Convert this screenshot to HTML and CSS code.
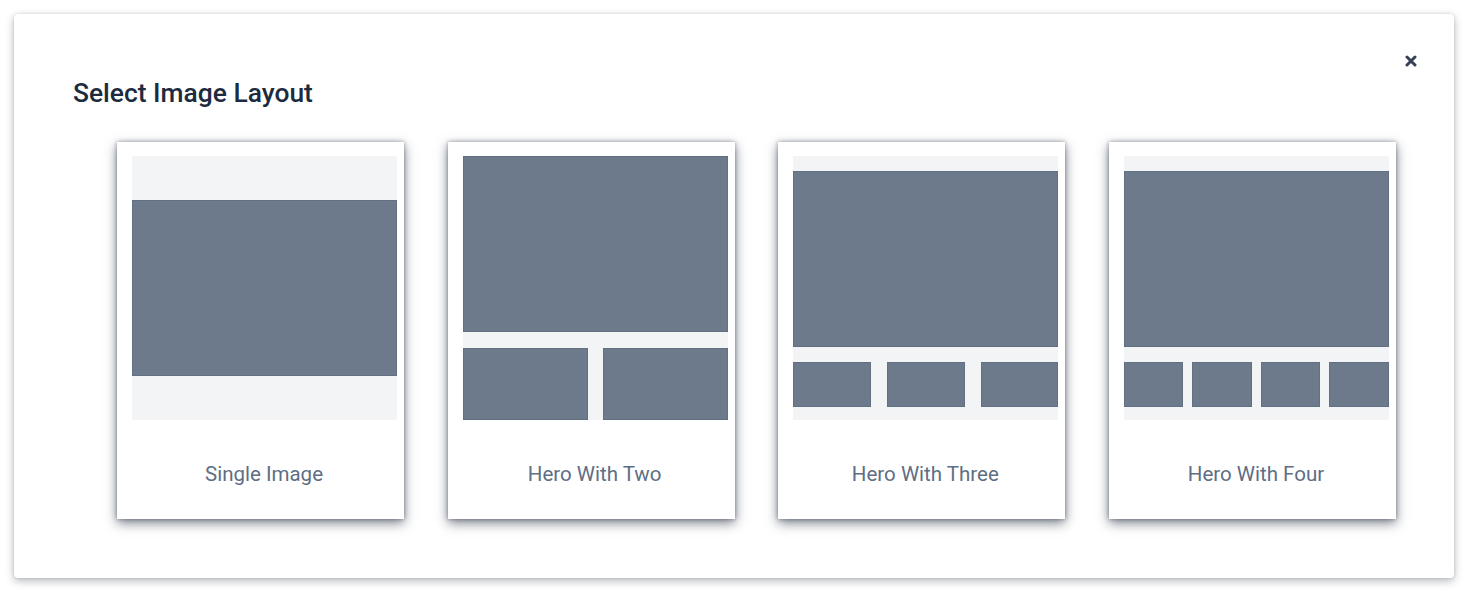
FILE: index.html
```html
<!DOCTYPE html>
<html>
<head>
<meta charset="utf-8">
<link rel="stylesheet" href="styles.css">
</head>
<body>
<div class="modal">
  <button class="close" aria-label="Close">
    <svg width="12" height="12" viewBox="0 0 12 12"><path d="M2 2 L10 10 M10 2 L2 10" stroke="#354256" stroke-width="3" stroke-linecap="round"/></svg>
  </button>
  <h2 class="title">Select Image Layout</h2>
  <div class="cards">
    <div class="card">
      <div class="preview single">
        <div class="block hero"></div>
      </div>
      <div class="label">Single Image</div>
    </div>
    <div class="card">
      <div class="preview two">
        <div class="block hero"></div>
        <div class="row gap15">
          <div class="block"></div>
          <div class="block"></div>
        </div>
      </div>
      <div class="label">Hero With Two</div>
    </div>
    <div class="card">
      <div class="preview multi">
        <div class="block hero"></div>
        <div class="row small gap16">
          <div class="block"></div>
          <div class="block"></div>
          <div class="block"></div>
        </div>
      </div>
      <div class="label">Hero With Three</div>
    </div>
    <div class="card">
      <div class="preview multi">
        <div class="block hero"></div>
        <div class="row small gap10">
          <div class="block"></div>
          <div class="block"></div>
          <div class="block"></div>
          <div class="block"></div>
        </div>
      </div>
      <div class="label">Hero With Four</div>
    </div>
  </div>
</div>
</body>
</html>
```

FILE: styles.css
```css
html, body {
  margin: 0;
  padding: 0;
  background: #ffffff;
}
body {
  padding: 14px;
  font-family: Roboto, "Liberation Sans", Arial, sans-serif;
}
.modal {
  position: relative;
  box-sizing: border-box;
  width: 1440px;
  height: 564px;
  background: #ffffff;
  border-radius: 4px;
  box-shadow: 0 3px 9px rgba(30, 40, 55, 0.32), 0 0 3px rgba(30, 40, 55, 0.14);
  padding: 64px 0 0 59px;
}
.close {
  position: absolute;
  top: 41px;
  right: 37px;
  width: 12px;
  height: 12px;
  padding: 0;
  border: 0;
  background: none;
  display: flex;
}
.title {
  margin: 0;
  font-size: 26.4px;
  font-weight: 500;
  line-height: 30px;
  color: #1d2b3e;
}
.cards {
  display: flex;
  gap: 43.67px;
  margin-top: 34px;
  margin-left: 44px;
}
.card {
  box-sizing: border-box;
  flex: none;
  width: 287px;
  height: 377px;
  background: #ffffff;
  padding: 14px 7px 0 15px;
  box-shadow: 0 4px 11px rgba(30, 40, 55, 0.58), 0 0 4px rgba(30, 40, 55, 0.4);
  display: flex;
  flex-direction: column;
}
.preview {
  width: 265px;
  height: 264px;
  background: #f3f4f6;
  display: flex;
  flex-direction: column;
}
.block {
  background: #6c7a8c;
  box-shadow: inset 0 0 0 1px rgba(80, 95, 115, 0.35);
}
.single {
  justify-content: center;
}
.single .hero {
  height: 176px;
}
.two .hero {
  height: 176px;
}
.two .row {
  margin-top: 16px;
  height: 72px;
}
.multi .hero {
  margin-top: 15px;
  height: 176px;
}
.multi .row.small {
  margin-top: 15px;
  height: 45px;
}
.row {
  display: flex;
}
.row .block {
  flex: 1;
}
.gap15 { gap: 15px; }
.gap16 { gap: 16px; }
.gap10 { gap: 9px; }
.label {
  flex: 1;
  display: flex;
  align-items: center;
  justify-content: center;
  padding-top: 8px;
  font-size: 20.5px;
  color: #5e6e84;
  margin-left: -1px;
}
```
